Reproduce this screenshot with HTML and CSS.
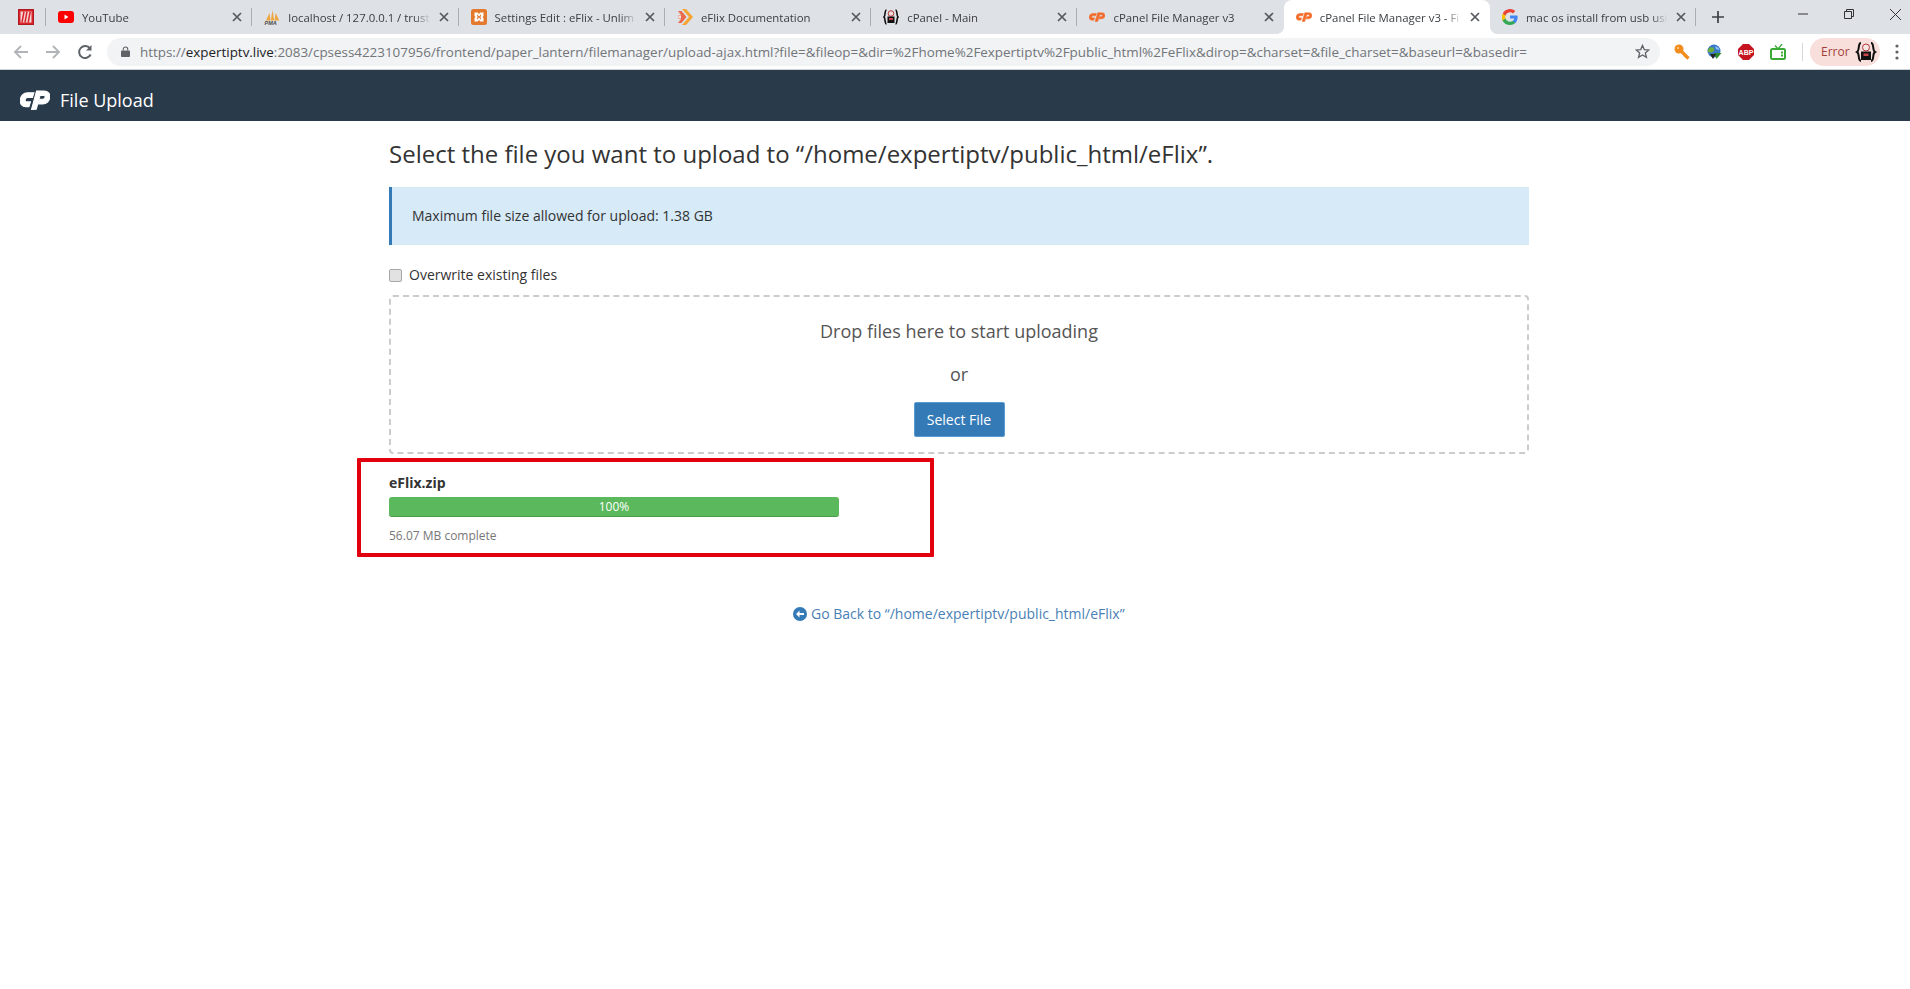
FILE: index.html
```html
<!DOCTYPE html>
<html lang="en">
<head>
<meta charset="utf-8">
<title>File Upload</title>
<link rel="stylesheet" href="styles.css">
</head>
<body>
<div class="tabstrip">
  <div class="pinned">
    <svg class="fav" viewBox="0 0 16 16"><rect x="0.5" y="0.5" width="15" height="15" fill="#d8232a" stroke="#b01a20"/><rect x="2.500" y="2.500" width="11" height="11" fill="#f6d5d5"/><path d="M6 2.500 4 13.500M9 2.500 7 13.500M12.200 2.500 10.200 13.500" stroke="#d8232a" stroke-width="1.500"/></svg>
  </div>
  <div class="tab">
    <svg class="fav" viewBox="0 0 16 16"><rect y="2" width="16" height="12" rx="3" fill="#f00"/><path d="M6.500 5.500v5l4-2.500z" fill="#fff"/></svg>
    <span class="tab-title">YouTube</span><svg class="x" viewBox="0 0 10 10"><path d="M1 1l8 8M9 1 1 9"/></svg>
  </div>
  <div class="tab">
    <svg class="fav" viewBox="0 0 16 16"><path d="M2 11.500 5.500 4l1 7.500zM6.800 11.500 8.500 1l1.700 10.500zM10.500 11.500l1.200-7.500 3.500 7.500z" fill="#f0a63e"/><text x="0.500" y="15.800" class="pma">PMA</text></svg>
    <span class="tab-title">localhost / 127.0.0.1 / trust</span><svg class="x" viewBox="0 0 10 10"><path d="M1 1l8 8M9 1 1 9"/></svg>
  </div>
  <div class="tab">
    <svg class="fav" viewBox="0 0 16 16"><rect width="16" height="16" rx="2.500" fill="#e2792d"/><path d="M3.500 3.500h3.200L8 5l1.300-1.500h3.200V7L11.500 8l1 1v3.500H9.300L8 11l-1.300 1.500H3.500V9l1-1-1-1zM6 5.500v1.800L7 8 6 8.700v1.800h.2L8 8.500l1.800 2h.2V8.700L9 8l1-.7V5.500h-.2L8 7.500l-1.800-2z" fill="#fff"/></svg>
    <span class="tab-title">Settings Edit : eFlix - Unlim</span><svg class="x" viewBox="0 0 10 10"><path d="M1 1l8 8M9 1 1 9"/></svg>
  </div>
  <div class="tab">
    <svg class="fav" viewBox="0 0 16 16"><path d="M5 0h4l7 8-7 8H5l7-8z" fill="#f3a533"/><path d="M1 2h3.500l5 6-5 6H1l3-4H1.500V6H4z" fill="#ec6a4c"/><path d="M1.500 6.500H4v3H1.500z" fill="#f8e5dc"/></svg>
    <span class="tab-title">eFlix Documentation</span><svg class="x" viewBox="0 0 10 10"><path d="M1 1l8 8M9 1 1 9"/></svg>
  </div>
  <div class="tab">
    <svg class="fav" viewBox="0 0 16 16"><path d="M3.500 1C1.500 1 2.500 7 1 8c1.500 1 .5 7 2.500 7M12.500 1c2 0 1 6 2.500 7-1.500 1-.5 7-2.500 7" fill="none" stroke="#111" stroke-width="1.600"/><circle cx="8" cy="4.500" r="2.800" fill="#f0dcd8" stroke="#b3363c"/><path d="M4.500 7.500h7V14h-7z" fill="#111"/><rect x="6" y="9" width="4" height="2" fill="#c9464c"/></svg>
    <span class="tab-title">cPanel - Main</span><svg class="x" viewBox="0 0 10 10"><path d="M1 1l8 8M9 1 1 9"/></svg>
  </div>
  <div class="tab">
    <svg class="fav" viewBox="0 0 30 18"><use href="#cp-mark" fill="#f26c2b" stroke="#f26c2b" stroke-width="1"/></svg>
    <span class="tab-title">cPanel File Manager v3</span><svg class="x" viewBox="0 0 10 10"><path d="M1 1l8 8M9 1 1 9"/></svg>
  </div>
  <div class="tab active">
    <svg class="fav" viewBox="0 0 30 18"><use href="#cp-mark" fill="#f26c2b" stroke="#f26c2b" stroke-width="1"/></svg>
    <span class="tab-title">cPanel File Manager v3 - Fi</span><svg class="x" viewBox="0 0 10 10"><path d="M1 1l8 8M9 1 1 9"/></svg>
  </div>
  <div class="tab">
    <svg class="fav" viewBox="0 0 16 16"><path d="M15.600 8.200c0-.6 0-1.100-.2-1.600H8v3h4.300a3.700 3.700 0 0 1-1.600 2.400v2h2.600c1.500-1.400 2.300-3.400 2.300-5.800z" fill="#4285f4"/><path d="M8 16c2.200 0 4-.7 5.300-2l-2.600-2c-.7.500-1.600.8-2.700.8-2.100 0-3.900-1.400-4.500-3.300H.5v2.100A8 8 0 0 0 8 16z" fill="#34a853"/><path d="M3.500 9.500a4.800 4.800 0 0 1 0-3V4.400H.8a8 8 0 0 0 0 7.200z" fill="#fbbc05"/><path d="M8 3.200c1.200 0 2.200.4 3 1.200l2.300-2.300A8 8 0 0 0 .8 4.400l2.700 2.100C4.100 4.600 5.900 3.200 8 3.200z" fill="#ea4335"/></svg>
    <span class="tab-title">mac os install from usb usi</span><svg class="x" viewBox="0 0 10 10"><path d="M1 1l8 8M9 1 1 9"/></svg>
  </div>
  <svg class="newtab" viewBox="0 0 12 12"><path d="M6 0v12M0 6h12" stroke="#3c4043" stroke-width="1.700"/></svg>
  <div class="winctl">
    <svg viewBox="0 0 10 10"><path d="M0 5h10" stroke="#333"/></svg>
    <svg viewBox="0 0 10 10"><path d="M.5 2.500h7v7h-7zM2.500 2.500v-2h7v7h-2" fill="none" stroke="#333"/></svg>
    <svg viewBox="0 0 10 10"><path d="M0 0l10 10M10 0 0 10" stroke="#333" stroke-width=".9"/></svg>
  </div>
</div>

<div class="toolbar">
  <svg class="navbtn muted" viewBox="0 0 16 16"><path d="M15 8H2M8 2 2 8l6 6" fill="none" stroke-width="1.800"/></svg>
  <svg class="navbtn muted" viewBox="0 0 16 16"><path d="M1 8h13M8 2l6 6-6 6" fill="none" stroke-width="1.800"/></svg>
  <svg class="navbtn" viewBox="0 0 16 16"><path d="M13.600 10.500A6 6 0 1 1 13 4.500" fill="none" stroke-width="2"/><path d="M14.500 1v5.500H9z" class="solid"/></svg>
  <div class="omnibox">
    <svg class="lock" viewBox="0 0 10 12"><path d="M2.500 5V3.500a2.500 2.500 0 0 1 5 0V5" fill="none" stroke="#5f6368" stroke-width="1.200"/><rect y="5" width="10" height="7" rx="1" fill="#5f6368"/></svg>
    <span class="url"><span class="url-dim">https://</span><span class="url-host">expertiptv.live</span><span class="url-dim">:2083/cpsess4223107956/frontend/paper_lantern/filemanager/upload-ajax.html?file=&amp;fileop=&amp;dir=%2Fhome%2Fexpertiptv%2Fpublic_html%2FeFlix&amp;dirop=&amp;charset=&amp;file_charset=&amp;baseurl=&amp;basedir=</span></span>
    <svg class="star" viewBox="0 0 16 16"><path d="M8 1.500 9.900 6l4.800.4-3.700 3.100 1.200 4.700L8 11.700l-4.200 2.500L5 9.500 1.300 6.400 6.100 6z" fill="none" stroke="#5f6368" stroke-width="1.400"/></svg>
  </div>
  <div class="exts">
    <svg viewBox="0 0 16 16"><circle cx="5" cy="5" r="4.500" fill="#f28c1c"/><path d="M7 7l7.500 7.500" stroke="#f28c1c" stroke-width="3.200"/><path d="M10.500 13l1.800-1.800" stroke="#f28c1c" stroke-width="2"/><circle cx="4" cy="4" r="1" fill="#fbd09a"/></svg>
    <svg viewBox="0 0 16 16"><circle cx="8" cy="7" r="6.500" fill="#3a78c8"/><path d="M1.500 7c1-4.500 5-4.500 6.500-2.500S5 11 1.500 7z" fill="#6aae3c"/><path d="M9 2.500c2 0 4 1.500 4.500 3.500L10 5z" fill="#8fc9ee"/><path d="M8 9h7.500l-5 6z" fill="#2e8b2e"/><path d="M4 10h6l-3 5z" fill="#222"/></svg>
    <svg viewBox="0 0 16 16"><path d="M5 0h6l5 5v6l-5 5H5l-5-5V5z" fill="#c5141f"/><text x="8" y="10.800" class="abp">ABP</text></svg>
    <svg viewBox="0 0 16 16"><rect x="1" y="5" width="14" height="10" rx="1.500" fill="none" stroke="#3aaa35" stroke-width="2"/><rect x="11" y="7.500" width="2" height="2" fill="#3aaa35"/><rect x="11" y="10.500" width="2" height="2" fill="#3aaa35"/><path d="M5 1.500 8 5l4-5" fill="none" stroke="#3aaa35" stroke-width="1.300"/></svg>
  </div>
  <div class="tool-sep"></div>
  <div class="errchip"><span>Error</span>
    <svg viewBox="0 0 22 22"><path d="M6 2C2.500 2 5 9.500 2 11c3 1.500.5 9 4 9M16 2c3.500 0 1 7.500 4 9-3 1.500-.5 9-4 9" fill="none" stroke="#111" stroke-width="2"/><circle cx="11" cy="6.500" r="3.500" fill="#f6e6e2" stroke="#b3363c"/><path d="M6 10.500h10V19H6z" fill="#111"/><rect x="8.500" y="12.500" width="5" height="2.500" fill="#c9464c"/></svg>
  </div>
  <svg class="menu" viewBox="0 0 4 16"><circle cx="2" cy="2" r="1.600"/><circle cx="2" cy="8" r="1.600"/><circle cx="2" cy="14" r="1.600"/></svg>
</div>

<header class="navbar">
  <svg class="logo" viewBox="0 0 30 18" preserveAspectRatio="none"><use href="#cp-mark" fill="#fff" stroke="#fff" stroke-width="1"/></svg>
  <span class="brand">File Upload</span>
</header>

<main class="page">
  <h1 class="title">Select the file you want to upload to “/home/expertiptv/public_html/eFlix”.</h1>
  <div class="alert">Maximum file size allowed for upload: 1.38 GB</div>
  <label class="overwrite"><input type="checkbox" class="check"> Overwrite existing files</label>
  <div class="dropzone">
    <div class="drop-text">Drop files here to start uploading</div>
    <div class="drop-or">or</div>
    <button class="btn">Select File</button>
  </div>
  <div class="upload">
    <div class="filename">eFlix.zip</div>
    <div class="progress">100%</div>
    <div class="complete">56.07 MB complete</div>
    <div class="annotation"></div>
  </div>
  <div class="back">
    <a class="back-link"><svg class="back-icon" viewBox="0 0 14 14"><circle cx="7" cy="7" r="7"/><path d="M3 7l3.500-3.500V6H11v2H6.500v2.500z" fill="#fff"/></svg> Go Back to “/home/expertiptv/public_html/eFlix”</a>
  </div>
</main>

<svg class="defs" width="0" height="0"><defs>
  <g id="cp-mark"><path d="M14 2.500H7.500C3.500 2.500.5 5.500.2 9c-.3 3.500 2 6 5.500 6H9l1.500-4.300H7c-1.300 0-2-.8-1.800-2 .2-1.300 1.200-2 2.500-2h4.800z"/><path d="M11.500 17.500 16.500 1H24c4 0 6.500 2.500 5.800 6-.6 3.300-3.500 5.500-7 5.500h-4l1.300-4.200h2.700c1.200 0 2.100-.7 2.300-1.700.2-1-.5-1.800-1.600-1.800h-3.400l-3.800 12.500z"/></g>
</defs></svg>
</body>
</html>
```
FILE: styles.css
```css
* { box-sizing: border-box; }
html, body { margin: 0; padding: 0; background: #fff; }
body { width: 1910px; height: 989px; overflow: hidden; font-family: "Open Sans", "Noto Sans", sans-serif; font-size: 14px; color: #333; }
.defs { position: absolute; }

.tabstrip { height: 34px; background: #dee1e6; display: flex; align-items: center; font-size: 11.4px; color: #3c4043; }
.pinned { width: 46px; flex: none; height: 34px; display: flex; align-items: center; padding-left: 18px; position: relative; }
.pinned::after { content: ""; position: absolute; right: 0; top: 8px; height: 18px; width: 1px; background: #a9acb1; }
.fav { width: 16px; height: 16px; flex: none; }
.tab { width: 206.3px; flex: none; height: 34px; display: flex; align-items: center; padding: 0 10px 0 12px; gap: 8px; position: relative; }
.tab::after { content: ""; position: absolute; right: 0; top: 8px; height: 18px; width: 1px; background: #a9acb1; }
.tab:has(+ .active)::after { display: none; }
.tab.active { background: #fff; border-radius: 8px 8px 0 0; }
.tab.active::before, .tab.active::after { content: ""; position: absolute; bottom: 0; top: auto; width: 8px; height: 8px; }
.tab.active::before { left: -8px; background: radial-gradient(circle at 0 0, transparent 8px, #fff 8px); }
.tab.active::after { right: -8px; background: radial-gradient(circle at 100% 0, transparent 8px, #fff 8px); }
.tab-title { flex: 1; min-width: 0; white-space: nowrap; overflow: hidden; -webkit-mask-image: linear-gradient(to right, #000 88%, transparent 100%); mask-image: linear-gradient(to right, #000 88%, transparent 100%); }
.x { width: 10px; height: 10px; flex: none; stroke: #55585c; stroke-width: 1.700; }
.pma { font: italic bold 5.500px "Liberation Sans", sans-serif; fill: #4a4a4a; }
.newtab { width: 12px; height: 12px; margin-left: 16px; flex: none; }
.winctl { margin-left: auto; display: flex; align-items: center; gap: 36px; padding-right: 9px; align-self: flex-start; height: 28px; }
.winctl svg { width: 10px; height: 10px; }
.winctl svg:last-child { width: 11px; height: 11px; }

.toolbar { height: 36px; display: flex; align-items: center; background: #fff; border-bottom: 1px solid #d0d2d6; }
.navbtn { width: 16px; height: 16px; margin-left: 13px; margin-right: 3px; stroke: #5f6368; flex: none; }
.navbtn.muted { stroke: #b0b3b8; }
.solid { fill: #5f6368; stroke: none; }
.omnibox { margin-left: 11px; width: 1553px; flex: none; height: 28px; border-radius: 14px; background: #f1f3f4; display: flex; align-items: center; padding-left: 14px; font-size: 13.420px; }
.lock { width: 9px; height: 11px; flex: none; }
.url { margin-left: 10px; white-space: nowrap; color: #72757a; }
.url-host { color: #202124; }
.star { width: 15px; height: 15px; margin-left: auto; margin-right: 10px; flex: none; }
.exts { display: flex; gap: 16px; margin-left: 14px; flex: none; }
.exts svg { width: 16px; height: 16px; }
.abp { font: bold 7px "Liberation Sans", sans-serif; fill: #fff; text-anchor: middle; }
.tool-sep { width: 1px; height: 18px; background: #d5d7da; margin-left: 16px; flex: none; }
.errchip { margin-left: 7px; width: 70px; flex: none; height: 28px; border-radius: 14px; background: #f8dfdc; color: #a33e37; display: flex; align-items: center; justify-content: space-between; padding: 0 3px 0 11px; font-size: 12px; }
.errchip svg { width: 22px; height: 22px; }
.menu { width: 4px; height: 16px; margin-left: 15px; fill: #5f6368; flex: none; }

.navbar { height: 51px; background: #293a4a; display: flex; align-items: center; padding: 8px 0 0 20px; color: #fff; }
.logo { width: 30px; height: 20px; }
.brand { font-size: 18px; margin-left: 10px; }

.page { width: 1140px; margin-left: 389px; }
.title { margin: 17px 0 0; font-size: 24px; font-weight: 400; line-height: 32px; color: #333; }
.alert { margin-top: 17px; height: 58px; background: #d6eaf8; border-left: 3px solid #337ab7; padding-left: 20px; line-height: 58px; }
.overwrite { display: flex; align-items: center; height: 20px; margin-top: 19px; }
.check { appearance: none; -webkit-appearance: none; width: 13px; height: 13px; margin: 2px 7px 0 0; background: #e2e2e2; border: 1px solid #a8a8a8; border-radius: 2px; }
.dropzone { margin-top: 11px; height: 159px; border: 2px dashed #ccc; border-radius: 4px; text-align: center; padding-top: 21px; }
.drop-text { font-size: 18px; line-height: 26px; color: #555; }
.drop-or { font-size: 18px; line-height: 26px; margin-top: 17px; color: #555; }
.btn { margin-top: 15px; width: 91px; height: 35px; background: #337ab7; color: #fff; border: 1px solid #5c9bd1; border-radius: 2px; font: 14px "Open Sans", sans-serif; }
.upload { position: relative; margin-top: 19px; }
.filename { font-weight: 700; line-height: 20px; color: #333; }
.progress { margin-top: 4px; width: 450px; height: 20px; background: #5cb85c; border-bottom: 1px solid #4a9c4a; border-radius: 3px; color: #fff; text-align: center; font-size: 12px; line-height: 20px; }
.complete { margin-top: 9px; font-size: 12px; line-height: 20px; color: #777; }
.annotation { position: absolute; left: -32px; top: -15px; width: 577px; height: 99px; border: 4px solid #e2000f; border-radius: 1px; pointer-events: none; }
.back { margin-top: 58px; text-align: center; }
.back-link { color: #4a7fb5; }
.back-icon { width: 14px; height: 14px; fill: #337ab7; vertical-align: -2px; }
```
